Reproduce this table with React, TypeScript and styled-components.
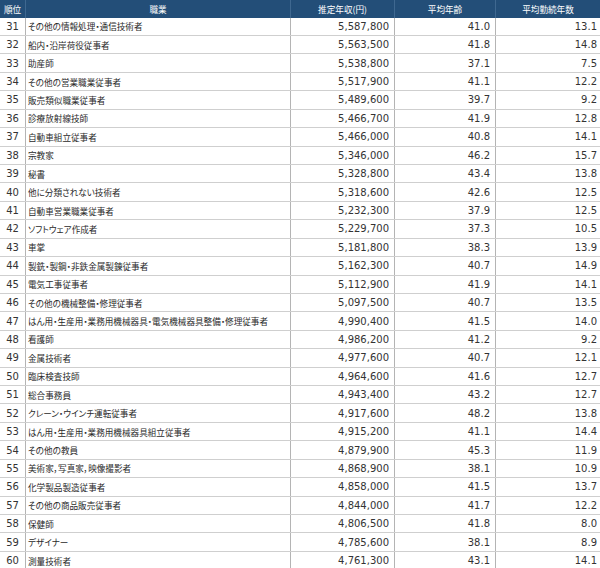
import React from "react";
import styled, { createGlobalStyle } from "styled-components";

const GlobalStyle = createGlobalStyle`
  html, body {
    margin: 0;
    padding: 0;
    background: #fff;
  }
  body {
    font-family: "Noto Sans CJK JP", sans-serif;
  }
`;

const COLUMNS = "26px 265px 104px 101px 104px";

const Table = styled.div`
  width: 600px;
  display: flex;
  flex-direction: column;
`;

const HeaderRow = styled.div`
  display: grid;
  grid-template-columns: ${COLUMNS};
  height: 17.6px;
  background-color: #234e78;
`;

const HeaderCell = styled.div`
  display: flex;
  align-items: center;
  justify-content: center;
  box-sizing: border-box;
  border-right: 1px solid #3f6890;
  color: #fff;
  font-family: "Noto Sans CJK JP", sans-serif;
  font-size: 8.6px;
  white-space: nowrap;
  &:last-child {
    border-right: none;
  }
`;

const Row = styled.div`
  display: grid;
  grid-template-columns: ${COLUMNS};
  height: 18.43px;
  box-sizing: border-box;
  border-bottom: 1px solid #cfcfcf;
`;

const Cell = styled.div<{ $align: "left" | "center" | "right" }>`
  display: flex;
  align-items: center;
  justify-content: ${(p) =>
    p.$align === "left" ? "flex-start" : p.$align === "right" ? "flex-end" : "center"};
  box-sizing: border-box;
  padding: ${(p) => (p.$align === "left" ? "0 0 0 2px" : p.$align === "right" ? "0 5px 0 0" : "0")};
  border-right: 1px solid #b4b4b4;
  color: #333;
  font-family: "DejaVu Sans", "Noto Sans CJK JP", sans-serif;
  font-size: 10px;
  white-space: nowrap;
  &:last-child {
    border-right: none;
    padding-right: 3px;
  }
`;

const Name = styled(Cell)`
  font-family: "Noto Sans CJK JP", sans-serif;
  font-size: 8.6px;
  font-feature-settings: "palt";
  color: #2a2a2a;
`;

interface Job {
  rank: number;
  name: string;
  income: string;
  age: string;
  years: string;
}

const jobs: Job[] = [
  { rank: 31, name: "その他の情報処理・通信技術者", income: "5,587,800", age: "41.0", years: "13.1" },
  { rank: 32, name: "船内・沿岸荷役従事者", income: "5,563,500", age: "41.8", years: "14.8" },
  { rank: 33, name: "助産師", income: "5,538,800", age: "37.1", years: "7.5" },
  { rank: 34, name: "その他の営業職業従事者", income: "5,517,900", age: "41.1", years: "12.2" },
  { rank: 35, name: "販売類似職業従事者", income: "5,489,600", age: "39.7", years: "9.2" },
  { rank: 36, name: "診療放射線技師", income: "5,466,700", age: "41.9", years: "12.8" },
  { rank: 37, name: "自動車組立従事者", income: "5,466,000", age: "40.8", years: "14.1" },
  { rank: 38, name: "宗教家", income: "5,346,000", age: "46.2", years: "15.7" },
  { rank: 39, name: "秘書", income: "5,328,800", age: "43.4", years: "13.8" },
  { rank: 40, name: "他に分類されない技術者", income: "5,318,600", age: "42.6", years: "12.5" },
  { rank: 41, name: "自動車営業職業従事者", income: "5,232,300", age: "37.9", years: "12.5" },
  { rank: 42, name: "ソフトウェア作成者", income: "5,229,700", age: "37.3", years: "10.5" },
  { rank: 43, name: "車掌", income: "5,181,800", age: "38.3", years: "13.9" },
  { rank: 44, name: "製銑・製鋼・非鉄金属製錬従事者", income: "5,162,300", age: "40.7", years: "14.9" },
  { rank: 45, name: "電気工事従事者", income: "5,112,900", age: "41.9", years: "14.1" },
  { rank: 46, name: "その他の機械整備・修理従事者", income: "5,097,500", age: "40.7", years: "13.5" },
  {
    rank: 47,
    name: "はん用・生産用・業務用機械器具・電気機械器具整備・修理従事者",
    income: "4,990,400",
    age: "41.5",
    years: "14.0",
  },
  { rank: 48, name: "看護師", income: "4,986,200", age: "41.2", years: "9.2" },
  { rank: 49, name: "金属技術者", income: "4,977,600", age: "40.7", years: "12.1" },
  { rank: 50, name: "臨床検査技師", income: "4,964,600", age: "41.6", years: "12.7" },
  { rank: 51, name: "総合事務員", income: "4,943,400", age: "43.2", years: "12.7" },
  { rank: 52, name: "クレーン・ウインチ運転従事者", income: "4,917,600", age: "48.2", years: "13.8" },
  { rank: 53, name: "はん用・生産用・業務用機械器具組立従事者", income: "4,915,200", age: "41.1", years: "14.4" },
  { rank: 54, name: "その他の教員", income: "4,879,900", age: "45.3", years: "11.9" },
  { rank: 55, name: "美術家，写真家，映像撮影者", income: "4,868,900", age: "38.1", years: "10.9" },
  { rank: 56, name: "化学製品製造従事者", income: "4,858,000", age: "41.5", years: "13.7" },
  { rank: 57, name: "その他の商品販売従事者", income: "4,844,000", age: "41.7", years: "12.2" },
  { rank: 58, name: "保健師", income: "4,806,500", age: "41.8", years: "8.0" },
  { rank: 59, name: "デザイナー", income: "4,785,600", age: "38.1", years: "8.9" },
  { rank: 60, name: "測量技術者", income: "4,761,300", age: "43.1", years: "14.1" },
];

const App: React.FC = () => {
  return (
    <>
      <GlobalStyle />
      <Table>
        <HeaderRow>
          <HeaderCell>順位</HeaderCell>
          <HeaderCell>職業</HeaderCell>
          <HeaderCell>推定年収(円)</HeaderCell>
          <HeaderCell>平均年齢</HeaderCell>
          <HeaderCell>平均勤続年数</HeaderCell>
        </HeaderRow>
        {jobs.map((job) => (
          <Row key={job.rank}>
            <Cell $align="center">{job.rank}</Cell>
            <Name $align="left">{job.name}</Name>
            <Cell $align="right">{job.income}</Cell>
            <Cell $align="right">{job.age}</Cell>
            <Cell $align="right">{job.years}</Cell>
          </Row>
        ))}
      </Table>
    </>
  );
};

export default App;
